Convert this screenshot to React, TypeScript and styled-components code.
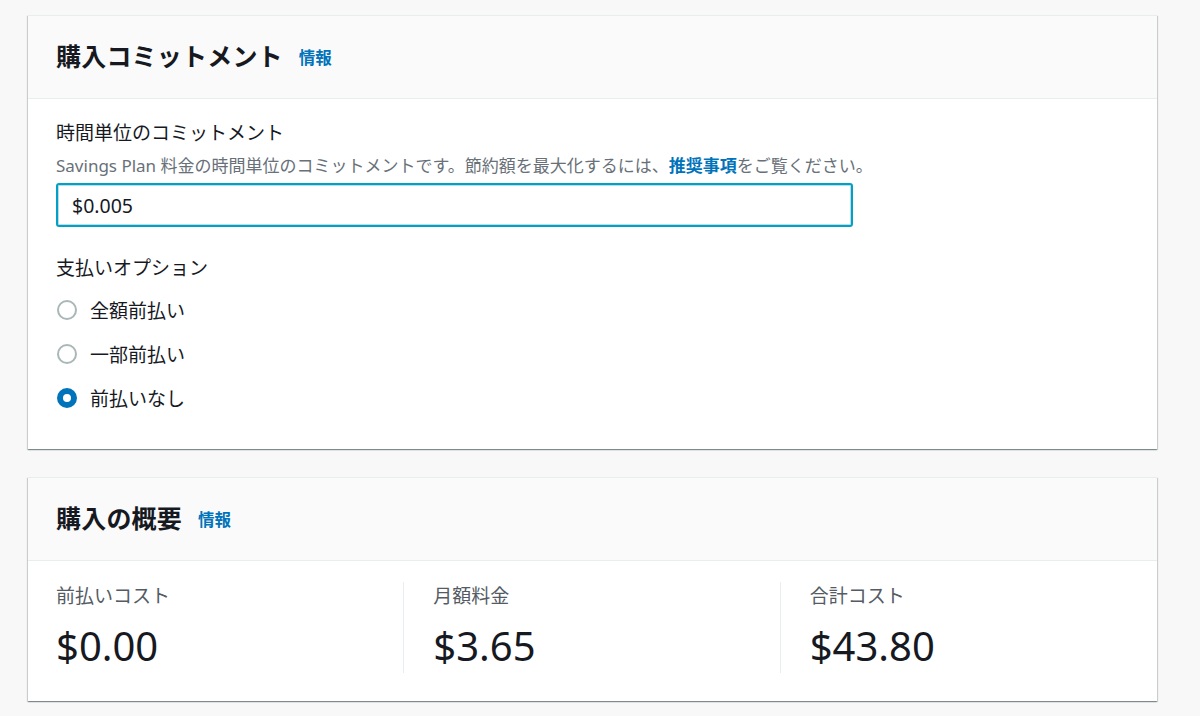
import React from "react";
import styled, { createGlobalStyle } from "styled-components";

const Global = createGlobalStyle`
  html, body { margin: 0; padding: 0; background: #f8f8f8; }
  body {
    font-family: "Noto Sans", "Noto Sans CJK JP", sans-serif;
    color: #16191f;
    -webkit-font-smoothing: antialiased;
  }
`;

const Page = styled.div`
  display: flex;
  flex-direction: column;
  gap: 28px;
  padding: 15px 43px 20px 28px;
  background: #f8f8f8;
`;

const Card = styled.section`
  background: #ffffff;
  border-top: 1px solid #eaeded;
  box-shadow: 0 1px 1px 0 rgba(0, 28, 36, 0.3), 1px 1px 1px 0 rgba(0, 28, 36, 0.15),
    -1px 1px 1px 0 rgba(0, 28, 36, 0.15);
`;

const Header = styled.header`
  display: flex;
  align-items: center;
  gap: 16px;
  padding: 23px 28px 24px;
  background: #fafafa;
  border-bottom: 1px solid #eaeded;
`;

const Title = styled.h2`
  margin: 0;
  font-size: 25px;
  line-height: 35px;
  font-weight: 700;
  color: #16191f;
  letter-spacing: 0.2px;
`;

const InfoLink = styled.a`
  font-size: 16.5px;
  line-height: 22px;
  font-weight: 700;
  color: #0073bb;
  text-decoration: none;
  margin-top: 2px;
`;

const Body = styled.div`
  display: flex;
  flex-direction: column;
  padding: 20px 28px 29px;
`;

const FieldLabel = styled.div<{ $top?: number }>`
  font-size: 19px;
  line-height: 28px;
  color: #16191f;
  margin-top: ${(p) => p.$top ?? 0}px;
`;

const Description = styled.div`
  font-size: 17px;
  line-height: 22px;
  color: #687078;
  margin-top: 8px;
`;

const DescLink = styled.a`
  color: #0073bb;
  font-weight: 700;
  text-decoration: none;
`;

const Input = styled.input`
  box-sizing: border-box;
  width: 797px;
  height: 44px;
  margin-top: 6px;
  padding: 0 14px;
  border: 2px solid #00a1c9;
  border-radius: 3px;
  box-shadow: inset 0 0 0 1px rgba(0, 115, 150, 0.25);
  font-family: "Noto Sans", "Noto Sans CJK JP", sans-serif;
  font-size: 19.5px;
  color: #16191f;
  outline: none;
  background: #fff;
`;

const RadioGroup = styled.div`
  display: flex;
  flex-direction: column;
  margin-top: 6px;
`;

const RadioRow = styled.label`
  display: flex;
  align-items: center;
  gap: 13px;
  height: 44px;
  font-size: 19px;
  color: #16191f;
  cursor: pointer;
`;

const RadioDot = styled.span<{ $checked?: boolean }>`
  box-sizing: border-box;
  width: 20px;
  height: 20px;
  margin-left: 1px;
  border-radius: 50%;
  background: #fff;
  border: ${(p) => (p.$checked ? "6px solid #0073bb" : "2px solid #aab7b8")};
  flex: none;
`;

const SummaryGrid = styled.div`
  display: grid;
  grid-template-columns: 1fr 1fr 1fr;
  padding: 21px 0 28px;
`;

const Column = styled.div<{ $divider?: boolean }>`
  display: flex;
  flex-direction: column;
  padding-left: ${(p) => (p.$divider ? 29 : 28)}px;
  border-left: ${(p) => (p.$divider ? "1px solid #eaeded" : "none")};
  margin-left: ${(p) => (p.$divider ? -1 : 0)}px;
  padding-bottom: 3px;
`;

const ColLabel = styled.div`
  font-size: 19px;
  line-height: 28px;
  color: #545b64;
`;

const Value = styled.div`
  font-size: 40px;
  line-height: 48px;
  margin-top: 12px;
  color: #16191f;
`;

const options = ["全額前払い", "一部前払い", "前払いなし"];

const summary = [
  { label: "前払いコスト", value: "$0.00" },
  { label: "月額料金", value: "$3.65" },
  { label: "合計コスト", value: "$43.80" },
];

export default function App() {
  const [selected, setSelected] = React.useState(2);
  return (
    <>
      <Global />
      <Page>
        <Card>
          <Header>
            <Title>購入コミットメント</Title>
            <InfoLink href="#">情報</InfoLink>
          </Header>
          <Body>
            <FieldLabel>時間単位のコミットメント</FieldLabel>
            <Description>
              Savings Plan 料金の時間単位のコミットメントです。節約額を最大化するには、
              <DescLink href="#">推奨事項</DescLink>をご覧ください。
            </Description>
            <Input defaultValue="$0.005" />
            <FieldLabel $top={27}>支払いオプション</FieldLabel>
            <RadioGroup>
              {options.map((o, i) => (
                <RadioRow key={o} onClick={() => setSelected(i)}>
                  <RadioDot $checked={selected === i} />
                  {o}
                </RadioRow>
              ))}
            </RadioGroup>
          </Body>
        </Card>
        <Card>
          <Header>
            <Title>購入の概要</Title>
            <InfoLink href="#">情報</InfoLink>
          </Header>
          <SummaryGrid>
            {summary.map((s, i) => (
              <Column key={s.label} $divider={i > 0}>
                <ColLabel>{s.label}</ColLabel>
                <Value>{s.value}</Value>
              </Column>
            ))}
          </SummaryGrid>
        </Card>
      </Page>
    </>
  );
}
